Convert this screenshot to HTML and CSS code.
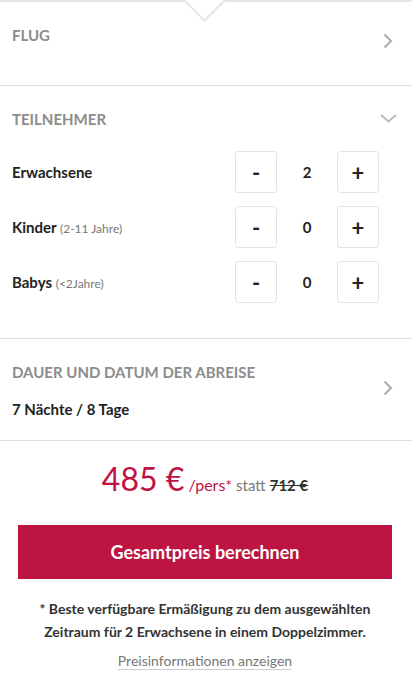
FILE: index.html
```html
<!DOCTYPE html>
<html lang="de">
<head>
  <meta charset="UTF-8" />
  <meta name="viewport" content="width=device-width, initial-scale=1.0"/>
  <title>Preis berechnen</title>
  <link rel="stylesheet" href="styles.css">
</head>
<body>
  <div class="booking">
    <div class="section flug">
      <div class="head">
        <span class="title">Flug</span>
        <svg class="chev-right" width="10" height="16" viewBox="0 0 10 16"><path d="M1.5 1.5 L8 8 L1.5 14.5" fill="none" stroke="#aaa" stroke-width="2"/></svg>
      </div>
    </div>

    <div class="section teilnehmer">
      <div class="head">
        <span class="title">Teilnehmer</span>
        <svg class="chev-down" width="17" height="9" viewBox="0 0 17 9"><path d="M1 1 L8.5 7.5 L16 1" fill="none" stroke="#bbb" stroke-width="2"/></svg>
      </div>

      <div class="row">
        <span class="label">Erwachsene</span>
        <div class="counter">
          <button class="step">-</button>
          <span class="value">2</span>
          <button class="step">+</button>
        </div>
      </div>
      <div class="row">
        <span class="label">Kinder <small>(2-11 Jahre)</small></span>
        <div class="counter">
          <button class="step">-</button>
          <span class="value">0</span>
          <button class="step">+</button>
        </div>
      </div>
      <div class="row">
        <span class="label">Babys <small>(&lt;2Jahre)</small></span>
        <div class="counter">
          <button class="step">-</button>
          <span class="value">0</span>
          <button class="step">+</button>
        </div>
      </div>
    </div>

    <div class="section dauer">
      <div class="info">
        <span class="title">Dauer und Datum der Abreise</span>
        <span class="chosen">7 Nächte / 8 Tage</span>
      </div>
      <svg class="chev-right" width="10" height="16" viewBox="0 0 10 16"><path d="M1.5 1.5 L8 8 L1.5 14.5" fill="none" stroke="#aaa" stroke-width="2"/></svg>
    </div>

    <div class="summary">
      <p class="price"><span class="amount">485 €</span> <span class="per">/pers*</span> <span class="statt">statt</span> <s class="old">712 €</s></p>
      <button class="calc">Gesamtpreis berechnen</button>
      <p class="note">* Beste verfügbare Ermäßigung zu dem ausgewählten Zeitraum für 2 Erwachsene in einem Doppelzimmer.</p>
      <a class="more" href="#">Preisinformationen anzeigen</a>
    </div>
  </div>
</body>
</html>
```

FILE: styles.css
```css
body {
  margin: 0;
  font-family: "Lato", "Liberation Sans", sans-serif;
  background: white;
  color: #222;
}
.booking {
  border-top: 2px solid #e6e6e6;
  position: relative;
}
/* little notch pointing down from the top line */
.booking::before {
  content: "";
  position: absolute;
  left: 190px;
  top: -15px;
  width: 27px;
  height: 27px;
  background: white;
  border-right: 2px solid #e6e6e6;
  border-bottom: 2px solid #e6e6e6;
  transform: rotate(45deg);
}
.section {
  border-bottom: 1px solid #ddd;
  padding: 0 15px 0 12px;
}
.head {
  display: flex;
  justify-content: space-between;
  align-items: flex-start;
  height: 18px;
}
.title {
  font-size: 15px;
  line-height: 18px;
  font-weight: bold;
  text-transform: uppercase;
  color: #8c8c8c;
}
.flug {
  padding-top: 24px;
  height: 59px;
}
.flug .chev-right {
  margin-top: 7px;
  margin-right: 4px;
}
.teilnehmer {
  padding-top: 24px;
  padding-bottom: 35px;
}
.teilnehmer .head {
  margin-bottom: 23px;
}
.chev-down {
  margin-top: 4px;
}
.row {
  display: flex;
  justify-content: space-between;
  align-items: center;
  margin-bottom: 13px;
  padding-right: 18px;
}
.row:last-child {
  margin-bottom: 0;
}
.label {
  font-size: 15px;
  font-weight: bold;
  color: #222;
}
.label small {
  font-size: 12px;
  font-weight: normal;
  color: #777;
}
.counter {
  display: flex;
  align-items: center;
}
.step {
  width: 42px;
  height: 42px;
  border: 1px solid #e4e4e4;
  border-radius: 3px;
  background: white;
  font-family: inherit;
  font-size: 22px;
  font-weight: bold;
  color: #222;
  padding: 0;
}
.value {
  width: 60px;
  text-align: center;
  font-size: 15px;
  font-weight: bold;
}
.dauer {
  display: flex;
  justify-content: space-between;
  align-items: center;
  padding-top: 24px;
  padding-bottom: 21px;
}
.dauer .chev-right {
  margin-top: -6px;
  margin-right: 4px;
}
.info {
  display: flex;
  flex-direction: column;
  gap: 18px;
}
.chosen {
  font-size: 15px;
  line-height: 20px;
  font-weight: bold;
}
.summary {
  text-align: center;
  padding: 18px 20px 0 18px;
}
.price {
  margin: 0 0 20px;
  line-height: 40px;
  color: #be1442;
}
.amount {
  font-size: 32px;
}
.per {
  font-size: 16px;
}
.statt {
  font-size: 15px;
  color: #777;
}
.old {
  font-size: 15px;
  font-weight: bold;
  color: #333;
}
.calc {
  display: block;
  width: 100%;
  height: 54px;
  border: none;
  background: #be1442;
  color: white;
  font-family: inherit;
  font-size: 18px;
  font-weight: bold;
}
.note {
  margin: 18px 10px 7px;
  font-size: 14px;
  line-height: 23px;
  font-weight: bold;
  color: #333;
}
.more {
  font-size: 14px;
  line-height: 20px;
  color: #777;
  text-decoration: none;
  border-bottom: 1px solid #ccc;
}
```
